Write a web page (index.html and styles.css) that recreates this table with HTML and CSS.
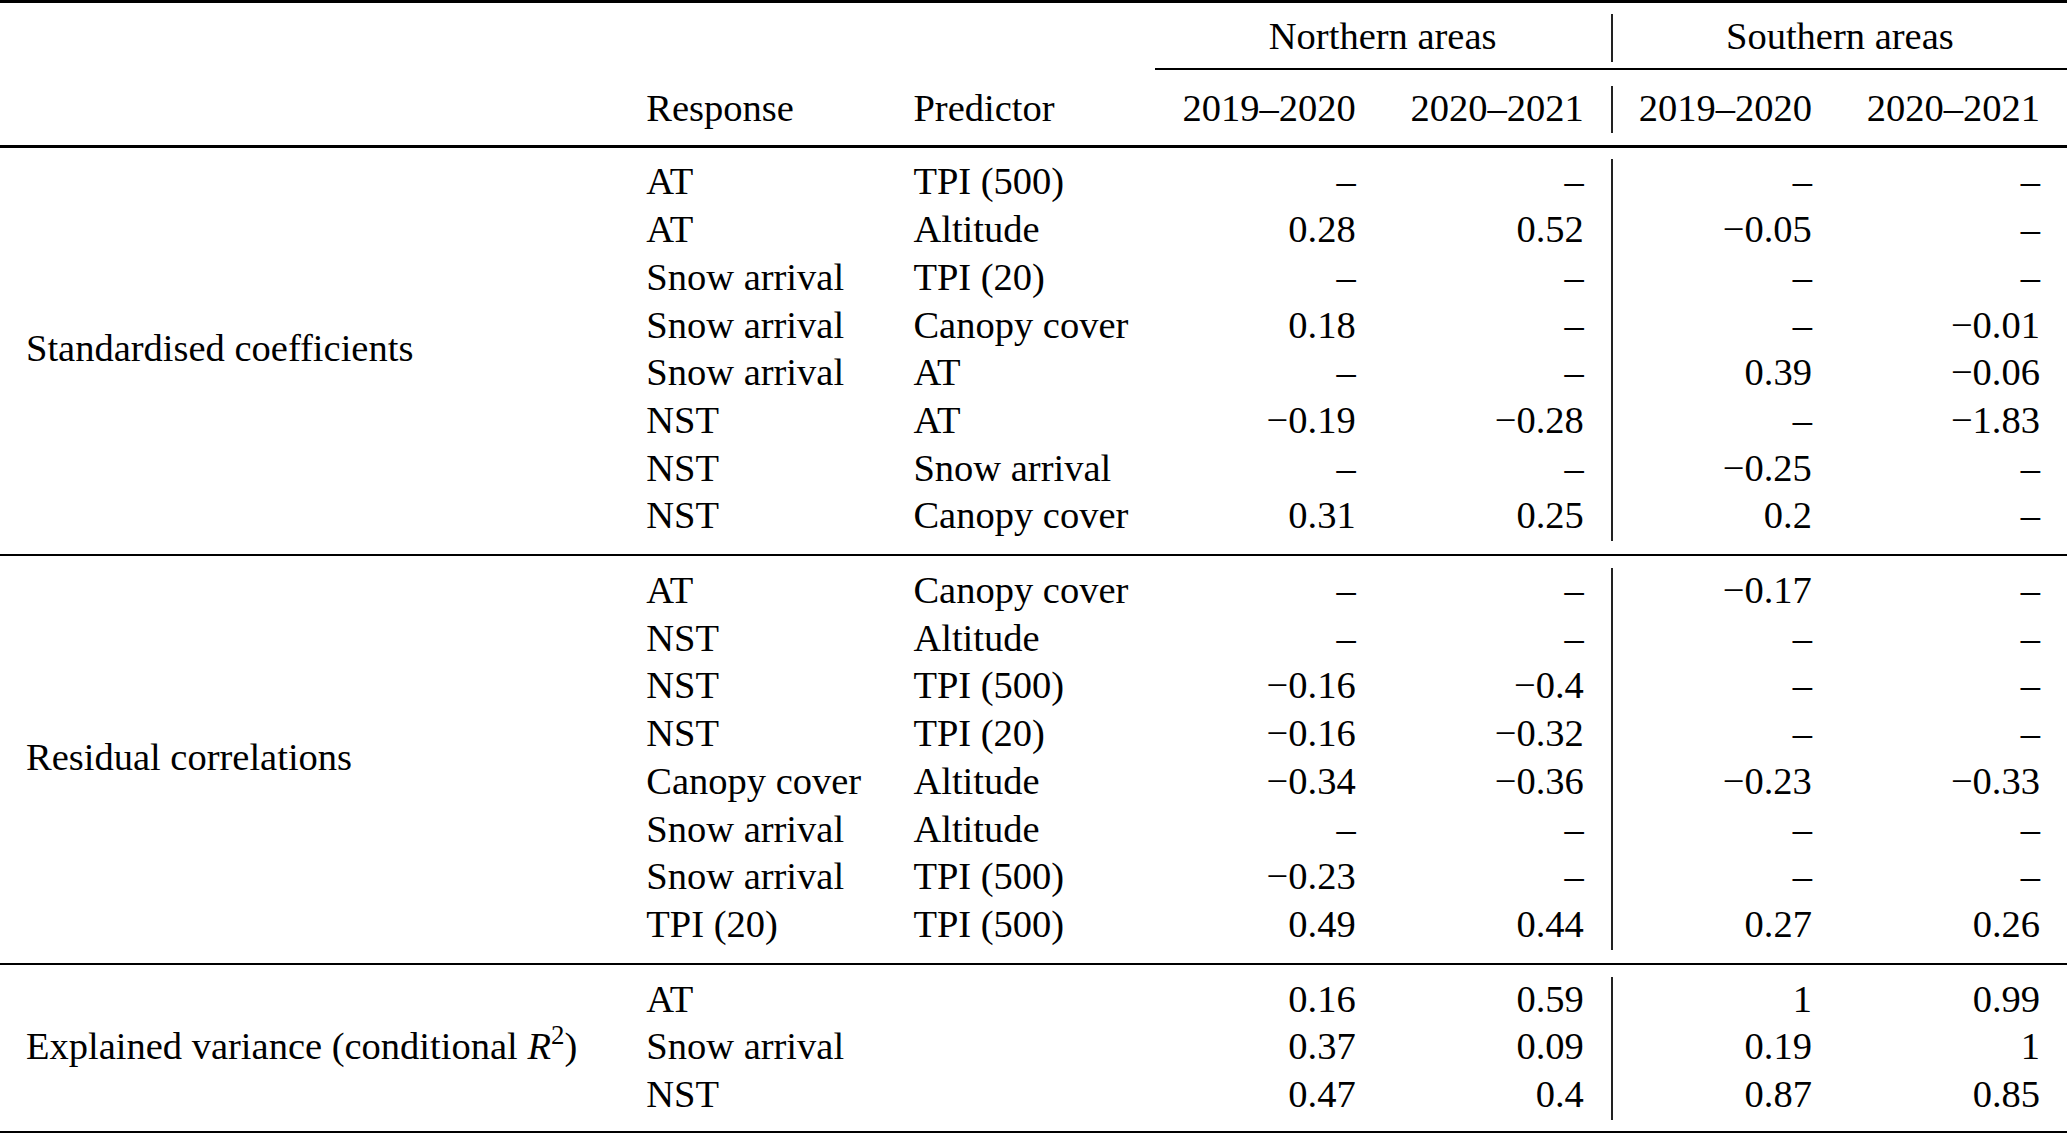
FILE: index.html
```html
<!DOCTYPE html>
<html>
<head>
<meta charset="utf-8">
<link rel="stylesheet" href="styles.css">
</head>
<body>
<table class="tbl">
  <colgroup>
    <col class="c-label">
    <col class="c-resp">
    <col class="c-pred">
    <col class="c-num">
    <col class="c-num">
    <col class="c-num">
    <col class="c-num">
  </colgroup>
  <tr class="rule heavy"><td colspan="7"></td></tr>
  <tr class="sp s11"><td colspan="7"></td></tr>
  <tr class="row">
    <td colspan="3"></td>
    <td colspan="2" class="ctr">Northern areas</td>
    <td colspan="2" class="ctr vl">Southern areas</td>
  </tr>
  <tr class="sp s6"><td colspan="7"></td></tr>
  <tr class="rule thin"><td colspan="3" class="blank"></td><td colspan="4"></td></tr>
  <tr class="sp s16"><td colspan="7"></td></tr>
  <tr class="row">
    <td></td>
    <td class="txt">Response</td>
    <td class="txt">Predictor</td>
    <td class="num">2019–2020</td>
    <td class="num">2020–2021</td>
    <td class="num vl">2019–2020</td>
    <td class="num">2020–2021</td>
  </tr>
  <tr class="sp s12"><td colspan="7"></td></tr>
  <tr class="rule mid"><td colspan="7"></td></tr>
  <tr class="sp s11"><td colspan="7"></td></tr>

  <tr class="row">
    <td rowspan="8" class="label">Standardised coefficients</td>
    <td class="txt">AT</td><td class="txt">TPI (500)</td>
    <td class="num">–</td><td class="num">–</td><td class="num vl">–</td><td class="num">–</td>
  </tr>
  <tr class="row">
    <td class="txt">AT</td><td class="txt">Altitude</td>
    <td class="num">0.28</td><td class="num">0.52</td><td class="num vl">−0.05</td><td class="num">–</td>
  </tr>
  <tr class="row">
    <td class="txt">Snow arrival</td><td class="txt">TPI (20)</td>
    <td class="num">–</td><td class="num">–</td><td class="num vl">–</td><td class="num">–</td>
  </tr>
  <tr class="row">
    <td class="txt">Snow arrival</td><td class="txt">Canopy cover</td>
    <td class="num">0.18</td><td class="num">–</td><td class="num vl">–</td><td class="num">−0.01</td>
  </tr>
  <tr class="row">
    <td class="txt">Snow arrival</td><td class="txt">AT</td>
    <td class="num">–</td><td class="num">–</td><td class="num vl">0.39</td><td class="num">−0.06</td>
  </tr>
  <tr class="row">
    <td class="txt">NST</td><td class="txt">AT</td>
    <td class="num">−0.19</td><td class="num">−0.28</td><td class="num vl">–</td><td class="num">−1.83</td>
  </tr>
  <tr class="row">
    <td class="txt">NST</td><td class="txt">Snow arrival</td>
    <td class="num">–</td><td class="num">–</td><td class="num vl">−0.25</td><td class="num">–</td>
  </tr>
  <tr class="row">
    <td class="txt">NST</td><td class="txt">Canopy cover</td>
    <td class="num">0.31</td><td class="num">0.25</td><td class="num vl">0.2</td><td class="num">–</td>
  </tr>

  <tr class="sp s13"><td colspan="7"></td></tr>
  <tr class="rule thin"><td colspan="7"></td></tr>
  <tr class="sp s12"><td colspan="7"></td></tr>

  <tr class="row">
    <td rowspan="8" class="label">Residual correlations</td>
    <td class="txt">AT</td><td class="txt">Canopy cover</td>
    <td class="num">–</td><td class="num">–</td><td class="num vl">−0.17</td><td class="num">–</td>
  </tr>
  <tr class="row">
    <td class="txt">NST</td><td class="txt">Altitude</td>
    <td class="num">–</td><td class="num">–</td><td class="num vl">–</td><td class="num">–</td>
  </tr>
  <tr class="row">
    <td class="txt">NST</td><td class="txt">TPI (500)</td>
    <td class="num">−0.16</td><td class="num">−0.4</td><td class="num vl">–</td><td class="num">–</td>
  </tr>
  <tr class="row">
    <td class="txt">NST</td><td class="txt">TPI (20)</td>
    <td class="num">−0.16</td><td class="num">−0.32</td><td class="num vl">–</td><td class="num">–</td>
  </tr>
  <tr class="row">
    <td class="txt">Canopy cover</td><td class="txt">Altitude</td>
    <td class="num">−0.34</td><td class="num">−0.36</td><td class="num vl">−0.23</td><td class="num">−0.33</td>
  </tr>
  <tr class="row">
    <td class="txt">Snow arrival</td><td class="txt">Altitude</td>
    <td class="num">–</td><td class="num">–</td><td class="num vl">–</td><td class="num">–</td>
  </tr>
  <tr class="row">
    <td class="txt">Snow arrival</td><td class="txt">TPI (500)</td>
    <td class="num">−0.23</td><td class="num">–</td><td class="num vl">–</td><td class="num">–</td>
  </tr>
  <tr class="row">
    <td class="txt">TPI (20)</td><td class="txt">TPI (500)</td>
    <td class="num">0.49</td><td class="num">0.44</td><td class="num vl">0.27</td><td class="num">0.26</td>
  </tr>

  <tr class="sp s13"><td colspan="7"></td></tr>
  <tr class="rule thin"><td colspan="7"></td></tr>
  <tr class="sp s12"><td colspan="7"></td></tr>

  <tr class="row">
    <td rowspan="3" class="label">Explained variance (conditional <i>R</i><sup>2</sup>)</td>
    <td class="txt">AT</td><td class="txt"></td>
    <td class="num">0.16</td><td class="num">0.59</td><td class="num vl">1</td><td class="num">0.99</td>
  </tr>
  <tr class="row">
    <td class="txt">Snow arrival</td><td class="txt"></td>
    <td class="num">0.37</td><td class="num">0.09</td><td class="num vl">0.19</td><td class="num">1</td>
  </tr>
  <tr class="row">
    <td class="txt">NST</td><td class="txt"></td>
    <td class="num">0.47</td><td class="num">0.4</td><td class="num vl">0.87</td><td class="num">0.85</td>
  </tr>

  <tr class="sp s11"><td colspan="7"></td></tr>
  <tr class="rule heavy"><td colspan="7"></td></tr>
</table>
</body>
</html>
```
FILE: styles.css
```css
html, body {
  margin: 0;
  padding: 0;
  background: #fff;
}

.tbl {
  width: 2067px;
  table-layout: fixed;
  border-collapse: separate;
  border-spacing: 0;
  font-family: "Liberation Serif", "Times New Roman", serif;
  font-size: 38.5px;
  color: #000;
}

.c-label { width: 619px; }
.c-resp { width: 267px; }
.c-pred { width: 268px; }
.c-num { width: 228px; }

.tbl td {
  padding: 0;
  white-space: nowrap;
}

.row { height: 47.7px; }
.row td {
  line-height: 44.7px;
  padding-bottom: 3px;
  vertical-align: middle;
}

.txt { padding-left: 27px !important; text-align: left; }
.num { padding-right: 27px !important; text-align: right; }
.ctr { text-align: center; }
.label { padding-left: 26px !important; text-align: left; }

.vl { border-left: 2px solid #222; }

.sp td { height: auto; line-height: 0; font-size: 0; }
.s6 td { height: 6px; }
.s11 td { height: 11px; }
.s12 td { height: 12px; }
.s13 td { height: 13px; }
.s16 td { height: 16px; }

.rule td { background: #000; line-height: 0; font-size: 0; }
.rule td.blank { background: transparent; }
.heavy td { height: 3px; }
.mid td { height: 3px; }
.thin td { height: 2px; }

.label sup {
  font-size: 0.7em;
  line-height: 0;
  vertical-align: 0.55em;
}
```
